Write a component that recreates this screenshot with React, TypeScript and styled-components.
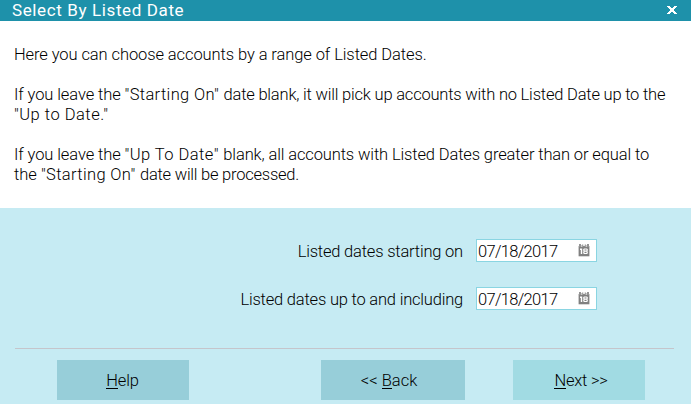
import React from "react";
import styled, { createGlobalStyle } from "styled-components";

const GlobalStyle = createGlobalStyle`
  * { box-sizing: border-box; }
  body { margin: 0; overflow: hidden; }
`;

const Dialog = styled.main`
  width: 691px;
  height: 404px;
  display: flex;
  flex-direction: column;
  background: #c6ebf3;
  color: #000;
  font-family: Roboto, "Liberation Sans", sans-serif;
  font-size: 16.5px;
  font-weight: 300;
  line-height: 20px;
  white-space: pre;
`;

const TitleBar = styled.header`
  height: 21px;
  flex: none;
  display: flex;
  align-items: center;
  justify-content: space-between;
  padding: 0 14px 0 12px;
  background: #1e91aa;
  color: #fff;
`;

const Title = styled.h1`
  margin: 0 0 1px;
  font-size: 17px;
  font-weight: 400;
  line-height: 20px;
  letter-spacing: 0.62px;
`;

const CloseButton = styled.button`
  display: flex;
  padding: 0;
  margin-bottom: 1px;
  border: 0;
  background: none;
  color: #fff;
`;

const Message = styled.section`
  height: 187px;
  flex: none;
  padding: 24px 14px 0;
  background: #fff;
`;

const Paragraph = styled.p`
  margin: 0 0 20px;
`;

const Line = styled.span`
  display: block;
`;

const Phrase = styled.span<{ $spacing: number }>`
  letter-spacing: ${(p) => p.$spacing}px;
`;

const Fields = styled.section`
  height: 140px;
  flex: none;
  display: flex;
  flex-direction: column;
  gap: 25px;
  padding-top: 31px;
`;

const Field = styled.div`
  display: grid;
  grid-template-columns: 463px 121px;
  grid-template-rows: 23px;
  column-gap: 13px;
`;

const Label = styled.label`
  text-align: right;
  line-height: 26px;
  letter-spacing: -0.2px;
`;

const DateBox = styled.div`
  height: 23px;
  display: flex;
  justify-content: space-between;
  border: 1px solid #8ad5e2;
  background: #fff;
  padding: 0 6px 0 1px;
`;

const DateText = styled.span`
  line-height: 24px;
  letter-spacing: -0.7px;
`;

const CalendarSvg = styled.svg`
  flex: none;
  margin-top: 4px;
`;

const Divider = styled.hr`
  width: 659px;
  height: 1px;
  flex: none;
  margin: 0 0 0 15px;
  border: 0;
  background: #c5c5cb;
`;

const Buttons = styled.footer`
  display: flex;
  padding: 11px 46px 0 57px;
`;

const Navigation = styled.div`
  display: flex;
  gap: 48px;
  margin-left: auto;
`;

const Button = styled.button<{ $wide?: boolean; $primary?: boolean; $spacing?: number; $shift?: number }>`
  width: ${(p) => (p.$wide ? 144 : 132)}px;
  height: 40px;
  padding: 0;
  border: 0;
  background: ${(p) => (p.$primary ? "#a1dbe3" : "#97ced9")};
  color: #000;
  font: inherit;
  line-height: 42px;
  letter-spacing: ${(p) => p.$spacing ?? 0}px;
  text-indent: ${(p) => p.$shift ?? 0}px;
`;

const AccessKey = styled.span`
  display: inline-block;
  height: 17px;
  line-height: 18px;
  text-indent: 0;
  border-bottom: 1px solid #000;
`;

function CalendarIcon() {
  return (
    <CalendarSvg width="12" height="13" viewBox="0 0 12 13">
      <path d="M.6 2h10.8v10.3H.6z" fill="#808080" />
      <path d="M1 0h2v3H1zM9 0h2v3H9z" fill="#959595" />
      <path d="M4 .6h1.3V3H4zM6.7.6H8V3H6.7z" fill="#a0a0a0" />
      <path d="M3 1h1v2H3zM8 1h1v2H8z" fill="#c8c8c8" />
      <path
        d="M2 4.5h2.2V10H2.8V6H2zM6 4.5h3l.8.8v1.3l-.5.6.5.6v1.4l-.8.8H6l-.8-.8V7.8l.5-.6-.5-.6V5.3zM6.5 5.5v1.1h2V5.5zM6.5 7.8V9h2V7.8z"
        fill="#fff"
        fillRule="evenodd"
      />
    </CalendarSvg>
  );
}

function CloseIcon() {
  return (
    <svg width="10" height="8" viewBox="0 0 10 8" shapeRendering="crispEdges">
      <path
        d="M0 0h3v1h1v1h2V1h1V0h3v1H9v1H8v1H7v2h1v1h1v1h1v1H7V7H6V6H4v1H3v1H0V7h1V6h1V5h1V3H2V2H1V1H0z"
        fill="currentColor"
      />
    </svg>
  );
}

type PhraseData = [text: string, spacing: number];

const paragraphs: PhraseData[][][] = [
  [[["Here you can choose accounts by a range of Listed Dates.", -0.09]]],
  [
    [
      ["If you leave the ", -0.1],
      ['"Starting On" ', 0.35],
      ["date blank, it will pick up accounts with no Listed Date up to the", -0.2],
    ],
    [['"Up to Date."', 0.5]],
  ],
  [
    [
      ["If you leave the ", -0.1],
      ['"Up To Date" ', 0.45],
      ["blank, all accounts with Listed Dates greater than or equal to", -0.13],
    ],
    [
      ["the ", 0],
      ['"Starting On" ', 0.35],
      ["date will be processed.", -0.23],
    ],
  ],
];

const fields = [
  { label: "Listed dates starting on", value: "07/18/2017" },
  { label: "Listed dates up to and including", value: "07/18/2017" },
];

export default function App() {
  return (
    <>
      <GlobalStyle />
      <Dialog>
        <TitleBar>
          <Title>Select By Listed Date</Title>
          <CloseButton aria-label="Close"><CloseIcon /></CloseButton>
        </TitleBar>
        <Message>
          {paragraphs.map((lines, i) => (
            <Paragraph key={i}>
              {lines.map((phrases, j) => (
                <Line key={j}>
                  {phrases.map(([text, spacing]) => (
                    <Phrase key={text} $spacing={spacing}>{text}</Phrase>
                  ))}
                </Line>
              ))}
            </Paragraph>
          ))}
        </Message>
        <Fields>
          {fields.map((f) => (
            <Field key={f.label}>
              <Label>{f.label}</Label>
              <DateBox>
                <DateText>{f.value}</DateText>
                <CalendarIcon />
              </DateBox>
            </Field>
          ))}
        </Fields>
        <Divider />
        <Buttons>
          <Button $spacing={-0.1} $shift={-1}><AccessKey>H</AccessKey>elp</Button>
          <Navigation>
            <Button $wide $shift={-8}>{"<< "}<AccessKey>B</AccessKey>ack</Button>
            <Button $primary $spacing={-0.25} $shift={4}><AccessKey>N</AccessKey>ext {">>"}</Button>
          </Navigation>
        </Buttons>
      </Dialog>
    </>
  );
}
